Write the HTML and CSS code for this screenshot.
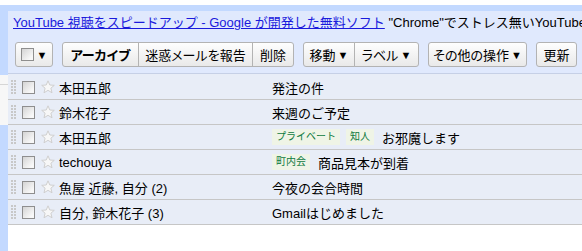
FILE: index.html
```html
<!DOCTYPE html>
<html lang="ja">
<head>
    <meta charset="UTF-8">
    <title>Gmail - 受信トレイ</title>
    <link rel="stylesheet" href="styles.css">
</head>
<body>

    <div class="app">
        <!-- Edge of the left navigation -->
        <div class="nav-edge">
            <div class="edge-top"></div>
            <div class="edge-gap"><div class="edge-line"></div></div>
            <div class="edge-bottom"></div>
        </div>

        <div class="main">
            <!-- Ad line + toolbar -->
            <div class="head">
                <div class="ad">
                    <a href="#">YouTube 視聴をスピードアップ - Google が開発した無料ソフト</a>
                    "Chrome"でストレス無いYouTube
                </div>

                <div class="toolbar">
                    <div class="btn-group">
                        <button class="btn btn-select"><span class="box"></span><span class="caret">▼</span></button>
                    </div>
                    <div class="btn-group">
                        <button class="btn btn-archive bold">アーカイブ</button>
                        <button class="btn btn-spam">迷惑メールを報告</button>
                        <button class="btn btn-delete">削除</button>
                    </div>
                    <div class="btn-group">
                        <button class="btn btn-move">移動<span class="caret">▼</span></button>
                        <button class="btn btn-label">ラベル<span class="caret">▼</span></button>
                    </div>
                    <div class="btn-group">
                        <button class="btn btn-more">その他の操作<span class="caret">▼</span></button>
                    </div>
                    <div class="btn-group">
                        <button class="btn btn-refresh">更新</button>
                    </div>
                </div>
            </div>

            <!-- Message list -->
            <div class="list" id="messageList"></div>
        </div>
    </div>

    <svg width="0" height="0" class="defs">
        <defs>
            <symbol id="star" viewBox="0 0 14 14">
                <path d="M7 0.8 L8.8 5 L13.3 5.3 L9.9 8.2 L11 12.8 L7 10.3 L3 12.8 L4.1 8.2 L0.7 5.3 L5.2 5 Z"
                      fill="#f7f7f7" stroke="#cfcfcf" stroke-width="1" stroke-linejoin="round"/>
            </symbol>
            <symbol id="grip" viewBox="0 0 5 14">
                <rect x="0" y="0" width="2" height="2"/><rect x="3" y="0" width="2" height="2"/>
                <rect x="0" y="3" width="2" height="2"/><rect x="3" y="3" width="2" height="2"/>
                <rect x="0" y="6" width="2" height="2"/><rect x="3" y="6" width="2" height="2"/>
                <rect x="0" y="9" width="2" height="2"/><rect x="3" y="9" width="2" height="2"/>
                <rect x="0" y="12" width="2" height="2"/><rect x="3" y="12" width="2" height="2"/>
            </symbol>
        </defs>
    </svg>

    <script>
        // Messages in the inbox
        const messages = [
            { from: '本田五郎', labels: [], subject: '発注の件' },
            { from: '鈴木花子', labels: [], subject: '来週のご予定' },
            { from: '本田五郎', labels: ['プライベート', '知人'], subject: 'お邪魔します' },
            { from: 'techouya', labels: ['町内会'], subject: '商品見本が到着' },
            { from: '魚屋 近藤, 自分 (2)', labels: [], subject: '今夜の会合時間' },
            { from: '自分, 鈴木花子 (3)', labels: [], subject: 'Gmailはじめました' }
        ];

        function loadMessages() {
            const list = document.getElementById('messageList');
            list.innerHTML = '';

            messages.forEach((msg) => {
                const row = document.createElement('div');
                row.classList.add('row');

                let labels = '';
                if (msg.labels.length) {
                    labels = '<span class="labels">' +
                        msg.labels.map(l => `<span class="label">${l}</span>`).join('') +
                        '</span>';
                }

                row.innerHTML = `
                    <svg class="grip"><use href="#grip"/></svg>
                    <span class="box"></span>
                    <svg class="star"><use href="#star"/></svg>
                    <span class="sender">${msg.from}</span>
                    <span class="subject">${labels}${msg.subject}</span>
                `;
                list.appendChild(row);
            });
        }

        loadMessages();
    </script>

</body>
</html>
```

FILE: styles.css
```css
body {
    margin: 0;
    background-color: #fff;
    font-family: "Liberation Sans", "Noto Sans CJK JP", sans-serif;
    font-size: 13px;
    color: #000;
    overflow: hidden;
}

.defs {
    position: absolute;
}

.app {
    display: flex;
    margin-top: 5px;
    height: 246px;
    overflow: hidden;
}

/* Left navigation edge */
.nav-edge {
    width: 8px;
    flex-shrink: 0;
    display: flex;
    flex-direction: column;
}

.edge-top {
    height: 70px;
    background-color: #c3d9ff;
}

.edge-gap {
    height: 50px;
    background-color: #f7f7f7;
}

.edge-line {
    height: 1px;
    margin-top: 9px;
    background-color: #d6d6d6;
}

.edge-bottom {
    flex-grow: 1;
    background-color: #c3d9ff;
}

.main {
    flex-grow: 1;
    min-width: 0;
}

/* Header */
.head {
    background-color: #e0e9fd;
    border-top: 6px solid #c3d9ff;
    border-bottom: 1px solid #c6d0e6;
    height: 62px;
}

.ad {
    padding: 3px 0 0 5px;
    height: 20px;
    line-height: 18px;
    white-space: nowrap;
    overflow: hidden;
}

.ad a {
    color: #1a1adc;
    text-decoration: underline;
}

.toolbar {
    display: flex;
    gap: 9px;
    padding: 8px 0 0 7px;
}

.btn-group {
    display: flex;
}

.btn {
    height: 25px;
    padding: 0;
    border: 1px solid #b3b3b3;
    border-radius: 3px;
    background: linear-gradient(#fefefe, #e9e9e9);
    font-family: "Liberation Sans", "Noto Sans CJK JP", sans-serif;
    font-size: 13px;
    font-feature-settings: "palt";
    color: #000;
    cursor: pointer;
    display: flex;
    align-items: center;
    justify-content: center;
    white-space: nowrap;
}

.btn-group .btn + .btn {
    margin-left: -1px;
}

.btn-group .btn:not(:first-child) {
    border-top-left-radius: 0;
    border-bottom-left-radius: 0;
}

.btn-group .btn:not(:last-child) {
    border-top-right-radius: 0;
    border-bottom-right-radius: 0;
}

.btn-archive { width: 77px; }
.btn-spam    { width: 115px; }
.btn-delete  { width: 42px; }
.btn-move    { width: 52px; }
.btn-label   { width: 65px; }
.btn-more    { width: 99px; }
.btn-refresh { width: 41px; }

.bold {
    font-weight: bold;
}

.caret {
    font-size: 11px;
    margin-left: 2px;
}

.btn-select {
    width: 38px;
}

.btn-select .caret {
    margin-left: 3px;
}

/* Checkbox */
.box {
    display: inline-block;
    width: 11px;
    height: 11px;
    border: 1px solid #8e8e8e;
    background: linear-gradient(135deg, #d4d4d4, #f8f8f8 80%);
    flex-shrink: 0;
}

/* Message list */
.list {
    padding-top: 1px;
    background-color: #e8edf7;
}

.row {
    display: flex;
    align-items: center;
    height: 24px;
    padding-left: 3px;
    border-bottom: 1px solid #c6c6c6;
    white-space: nowrap;
}

.grip {
    width: 5px;
    height: 14px;
    fill: #c8c8c8;
    flex-shrink: 0;
}

.row .box {
    margin-left: 6px;
}

.star {
    width: 14px;
    height: 14px;
    margin-left: 6px;
    flex-shrink: 0;
}

.sender {
    width: 213px;
    margin-left: 4px;
    flex-shrink: 0;
    overflow: hidden;
}

.subject {
    display: flex;
    align-items: center;
}

.labels {
    display: inline-flex;
    gap: 6px;
    margin-right: 8px;
}

.label {
    height: 16px;
    line-height: 16px;
    padding: 0 4px;
    font-size: 10px;
    color: #0d7a3f;
    background-color: #eff4e6;
}
```
